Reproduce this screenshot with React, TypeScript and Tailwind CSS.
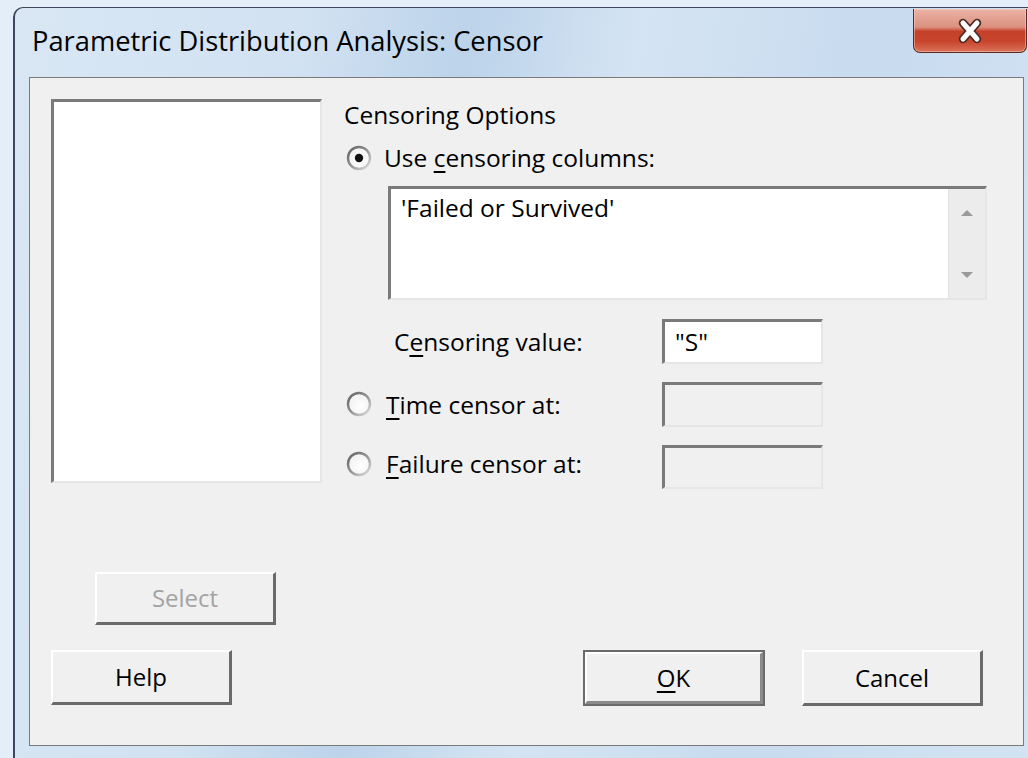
import React from "react";

const sunken =
  "border-solid border-t-[3px] border-l-[3px] border-r-2 border-b-2 border-t-[#7a7a7a] border-l-[#7a7a7a] border-r-[#e6e6e6] border-b-[#e6e6e6]";

function Radio({ checked }: { checked?: boolean }) {
  return (
    <svg width="26" height="26" viewBox="0 0 26 26" className="shrink-0">
      <defs>
        <linearGradient id="ring" x1="0" y1="0" x2="1" y2="1">
          <stop offset="0" stopColor="#5f5f5f" />
          <stop offset="0.55" stopColor="#9a9a9a" />
          <stop offset="1" stopColor="#e2e2e2" />
        </linearGradient>
        <radialGradient id="fill" cx="0.6" cy="0.6" r="0.6">
          <stop offset="0" stopColor="#ffffff" />
          <stop offset="1" stopColor="#f1f1f1" />
        </radialGradient>
      </defs>
      <circle cx="13" cy="13" r="11" fill="url(#fill)" stroke="url(#ring)" strokeWidth="2.4" />
      {checked && <circle cx="13" cy="13" r="4.2" fill="#111" />}
    </svg>
  );
}

function Button({
  children,
  disabled,
  primary,
  className = "",
}: {
  children: React.ReactNode;
  disabled?: boolean;
  primary?: boolean;
  className?: string;
}) {
  if (primary) {
    return (
      <div className={`border-2 border-[#6a6a6a] bg-[#f0f0f0] ${className}`}>
        <div className="h-full w-full border-solid border-t-2 border-l-2 border-r-[3px] border-b-[3px] border-t-white border-l-white border-r-[#8a8a8a] border-b-[#8a8a8a] flex items-center justify-center text-[24px] text-black">
          {children}
        </div>
      </div>
    );
  }
  return (
    <div
      className={`bg-[#f0f0f0] border-solid border-t-2 border-l-2 border-r-[3px] border-b-[3px] border-t-white border-l-white border-r-[#6a6a6a] border-b-[#6a6a6a] flex items-center justify-center text-[24px] ${
        disabled ? "text-[#a3a3a3]" : "text-black"
      } ${className}`}
    >
      {children}
    </div>
  );
}

function CloseButton() {
  return (
    <div className="mt-[1px] mr-[1px] w-[114px] h-[44px] rounded-b-[7px] border border-t-0 border-[#5d2a22] bg-[linear-gradient(to_bottom,#eab3a6_0%,#dc907f_42%,#c5402a_52%,#c9452c_75%,#d9735a_100%)] flex items-center justify-center shadow-[inset_0_0_0_1px_rgba(255,220,210,0.45)]">
      <svg width="30" height="26" viewBox="0 0 30 26">
        <path d="M8 5 L22 21 M22 5 L8 21" stroke="#4a2a24" strokeWidth="8.5" strokeLinecap="round" />
        <path d="M8 5 L22 21 M22 5 L8 21" stroke="#ffffff" strokeWidth="5" strokeLinecap="round" />
      </svg>
    </div>
  );
}

function Arrow({ up }: { up?: boolean }) {
  return (
    <svg width="14" height="8" viewBox="0 0 14 8">
      <path d={up ? "M1 7 L7 1 L13 7 Z" : "M1 1 L13 1 L7 7 Z"} fill="#9a9a9a" />
    </svg>
  );
}

export default function App() {
  return (
    <div className="w-[1028px] h-[758px] overflow-hidden bg-[#e3eef8] pt-[7px] pl-[13px] font-['Open_Sans',sans-serif]">
      <div className="w-[1015px] h-[751px] rounded-tl-[10px] border-l-2 border-t border-[#3a4859] bg-[linear-gradient(100deg,#d9e7f4_0%,#d2e2f2_25%,#bcd3ea_40%,#d5e4f3_55%,#c8dbef_75%,#d3e3f3_100%)] flex flex-col">
        {/* title bar */}
        <div className="h-[69px] flex items-start justify-between">
          <span className="mt-[16px] ml-[17px] text-[27.3px] leading-[34px] text-black">
            Parametric Distribution Analysis: Censor
          </span>
          <CloseButton />
        </div>

        {/* client area */}
        <div className="ml-[14px] w-[995px] h-[669px] bg-[#f0f0f0] border border-[#7a7a7a] pl-[21px] pt-[21px] flex flex-col text-black text-[24.5px]">
          <div className="h-[384px] flex items-start">
            {/* variable list */}
            <div className={`w-[271px] h-[384px] bg-white ${sunken}`} />

            {/* censoring options */}
            <div className="ml-[22px] flex flex-col">
              <div className="leading-[32px]">Censoring Options</div>

              <div className="mt-[11px] h-[32px] flex items-center">
                <div className="ml-[2px]">
                  <Radio checked />
                </div>
                <span className="ml-[12px] leading-[32px]">
                  Use <u className="underline-offset-[4px]">c</u>ensoring columns:
                </span>
              </div>

              <div className={`mt-[12px] ml-[44px] w-[599px] h-[114px] bg-white flex ${sunken}`}>
                <div className="flex-1 pl-[10px] pt-[3px] leading-[32px]">'Failed or Survived'</div>
                <div className="w-[37px] h-full bg-[#ececec] border-l border-[#e2e2e2] flex flex-col items-center justify-between pt-[20px] pb-[19px]">
                  <Arrow up />
                  <Arrow />
                </div>
              </div>

              <div className="mt-[19px] flex items-center">
                <div className="w-[318px] pl-[50px] leading-[32px]">
                  C<u className="underline-offset-[4px]">e</u>nsoring value:
                </div>
                <div className={`w-[161px] h-[45px] bg-white pl-[10px] flex items-center leading-[32px] ${sunken}`}>
                  "S"
                </div>
              </div>

              <div className="mt-[18px] flex items-center">
                <div className="w-[318px] flex items-center">
                  <div className="ml-[2px] -mt-[2px]">
                    <Radio />
                  </div>
                  <span className="ml-[14px] leading-[32px]">
                    <u className="underline-offset-[4px]">T</u>ime censor at:
                  </span>
                </div>
                <div className={`w-[161px] h-[45px] bg-[#f0f0f0] ${sunken}`} />
              </div>

              <div className="mt-[18px] flex items-center">
                <div className="w-[318px] flex items-center">
                  <div className="ml-[2px] -mt-[6px]">
                    <Radio />
                  </div>
                  <span className="ml-[14px] -mt-[6px] leading-[32px]">
                    <u className="underline-offset-[4px]">F</u>ailure censor at:
                  </span>
                </div>
                <div className={`w-[161px] h-[44px] bg-[#f0f0f0] ${sunken}`} />
              </div>
            </div>
          </div>

          <Button disabled className="mt-[89px] ml-[44px] w-[181px] h-[53px]">
            Select
          </Button>

          <div className="mt-[25px] flex items-start">
            <Button className="w-[181px] h-[55px]">Help</Button>
            <Button primary className="ml-[351px] w-[182px] h-[56px]">
              <span>
                <u className="underline-offset-[4px]">O</u>K
              </span>
            </Button>
            <Button className="ml-[37px] w-[181px] h-[56px]">Cancel</Button>
          </div>
        </div>
      </div>
    </div>
  );
}
